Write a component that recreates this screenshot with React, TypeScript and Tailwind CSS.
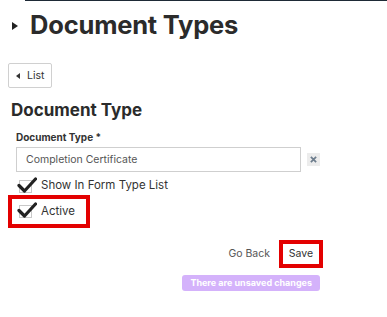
import { FC } from 'react';

const CheckRow: FC<{ label: string }> = ({ label }) => (
  <label className="flex items-center gap-[9px] h-[20px]">
    <span className="relative w-[13px] h-[13px] border border-[#c8c8c8] bg-white ml-[3px]">
      <svg viewBox="0 0 20 16" className="absolute left-[-3px] top-[-4px] w-[20px] h-[16px]">
        <path d="M2 8.5 L7.5 14 L18.5 2" fill="none" stroke="#222" strokeWidth="3.2" strokeLinecap="round" strokeLinejoin="round" />
      </svg>
    </span>
    <span className="text-[11.5px] text-[#333]">{label}</span>
  </label>
);

const App: FC = () => {
  return (
    <div className="w-[387px] h-[317px] bg-white overflow-hidden" style={{ fontFamily: 'Inter, "Noto Sans", sans-serif' }}>
      <div className="ml-[25px] h-px bg-[#1e2a36]" />

      {/* Page title */}
      <div className="flex items-center pl-[12px] pt-[5px] h-[44px]">
        <svg viewBox="0 0 6 8" className="w-[6px] h-[8px] mr-[12px]">
          <path d="M0 0 L6 4 L0 8 Z" fill="#222" />
        </svg>
        <h1 className="text-[25.5px] font-bold text-[#2b2b2b] tracking-[-0.2px]">Document Types</h1>
      </div>

      <div className="pl-[8px] pt-[18px]">
        <button className="flex items-center h-[25px] px-[7px] border border-[#d0d0d0] rounded-[2px] text-[10.5px] text-[#333]">
          <svg viewBox="0 0 4 6" className="w-[4px] h-[6px] mr-[7px]">
            <path d="M4 0 L0 3 L4 6 Z" fill="#333" />
          </svg>
          List
        </button>
      </div>

      <div className="pl-[11px] pt-[11px]">
        <h2 className="text-[17px] font-bold text-[#2b2b2b] leading-[22px]">Document Type</h2>
      </div>

      <div className="pl-[16px] pt-[10px]">
        <div className="text-[10px] font-bold text-[#333] leading-[13px]">Document Type *</div>
        <div className="flex items-center mt-[3px]">
          <div className="w-[285px] h-[25px] border border-[#cfcfcf] flex items-center pl-[9px] text-[10.5px] text-[#555]">
            Completion Certificate
          </div>
          <div className="ml-[6px] w-[13px] h-[13px] bg-[#ececec] flex items-center justify-center">
            <svg viewBox="0 0 8 8" className="w-[7px] h-[7px]">
              <path d="M1 1 L7 7 M7 1 L1 7" stroke="#6d7d8d" strokeWidth="2" />
            </svg>
          </div>
        </div>
      </div>

      <div className="pl-[16px] pt-[4px]">
        <CheckRow label="Show In Form Type List" />
      </div>

      <div className="ml-[8px] mt-[-1px] w-[82px] h-[33px] border-[4px] border-[#e30000] flex items-center pl-[4px]">
        <CheckRow label="Active" />
      </div>

      <div className="flex justify-end items-center pr-[64px] mt-[12px] gap-[9px]">
        <span className="text-[10.5px] text-[#555]">Go Back</span>
        <div className="w-[44px] h-[28px] border-[4px] border-[#e30000] flex items-center justify-center text-[10.5px] text-[#333]">
          Save
        </div>
      </div>

      <div className="flex justify-end pr-[67px] mt-[7px]">
        <div className="h-[16px] px-[8px] rounded-[3px] bg-[#d4b2fb] text-white text-[9px] font-bold flex items-center">
          There are unsaved changes
        </div>
      </div>
    </div>
  );
};

export default App;
